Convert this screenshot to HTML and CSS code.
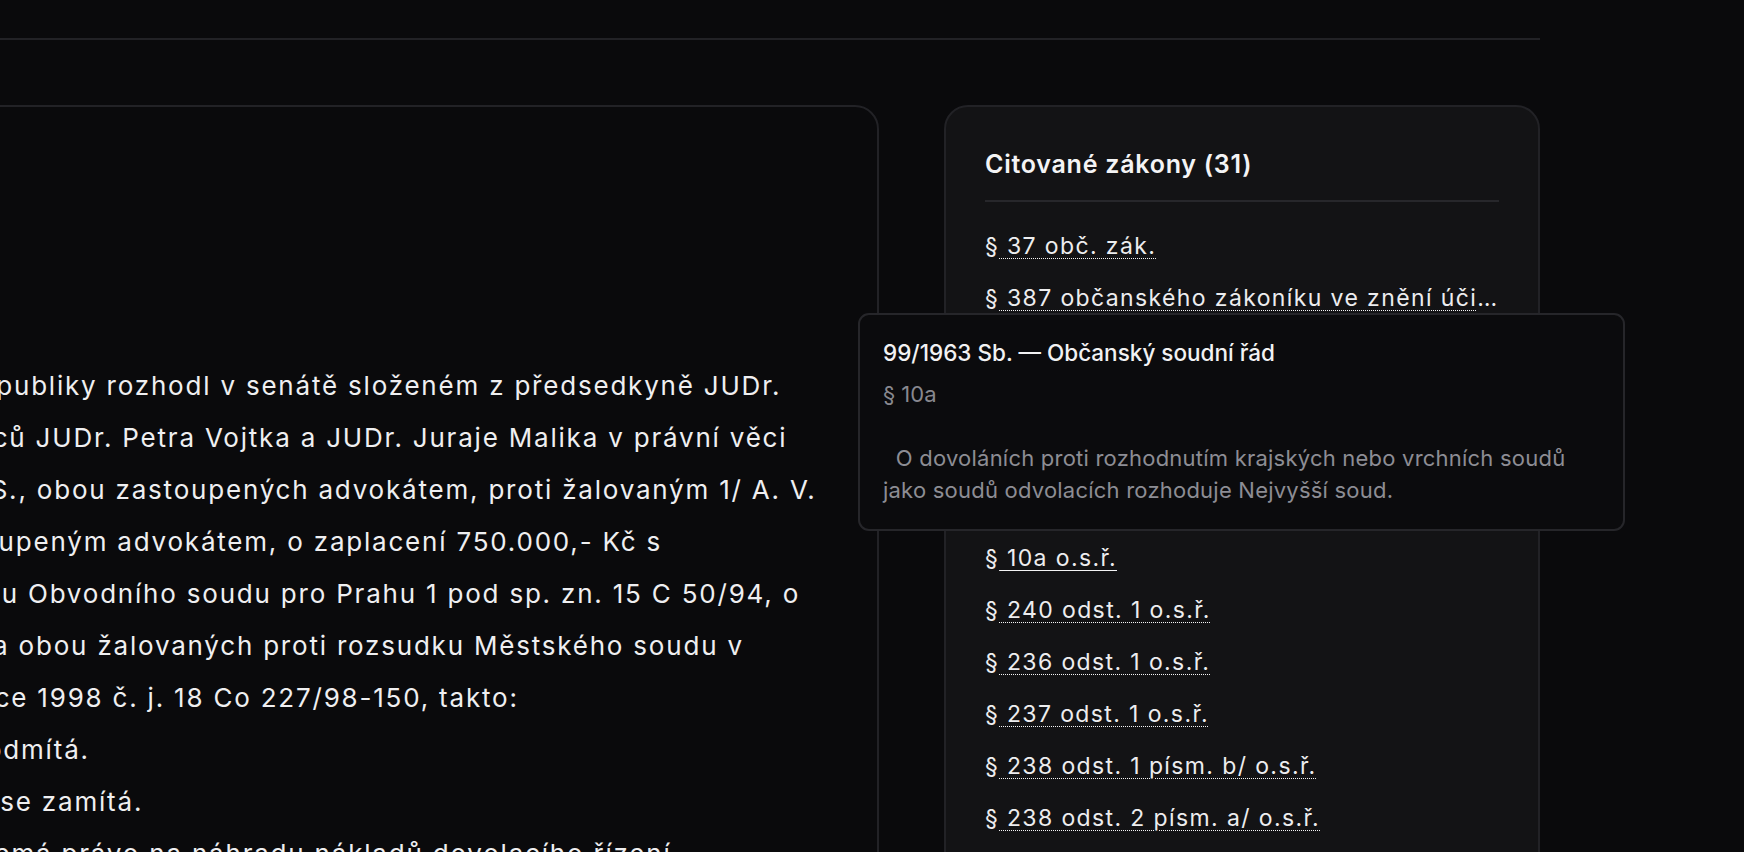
FILE: index.html
```html
<!DOCTYPE html>
<html lang="cs">
<head>
    <meta charset="UTF-8">
    <meta name="viewport" content="width=device-width, initial-scale=1.0">
    <title>Rozhodnutí – Nejvyšší soud</title>
    <link rel="stylesheet" href="styles.css">
</head>
<body>
    <div class="page">
        <header class="topbar"></header>

        <div class="layout">
            <article class="decision">
                <p class="decision-text">Nejvyšší soud České republiky rozhodl v senátě složeném z předsedkyně JUDr.<br>Ireny Puškinové a soudců JUDr. Petra Vojtka a JUDr. Juraje Malika v právní věci<br>žalobců 1/ P. S. a 2/ J. S., obou zastoupených advokátem, proti žalovaným 1/ A. V.<br>a 2/ M. V., oběma zastoupeným advokátem, o zaplacení 750.000,- Kč s<br>příslušenstvím, vedené u Obvodního soudu pro Prahu 1 pod sp. zn. 15 C 50/94, o<br>dovolání obou žalobců a obou žalovaných proti rozsudku Městského soudu v<br>Praze ze dne 15. prosince 1998 č. j. 18 Co 227/98-150, takto:</p>
                <p class="decision-text">I. Dovolání žalobců se odmítá.</p>
                <p class="decision-text">II. Dovolání žalovaných se zamítá.</p>
                <p class="decision-text">III. Žádný z účastníků nemá právo na náhradu nákladů dovolacího řízení.</p>
            </article>

            <aside class="laws">
                <h2 class="laws-title">Citované zákony (31)</h2>
                <ul class="laws-list">
                    <li class="law"><span class="sect">§</span><a href="#"> 37 obč. zák.</a></li>
                    <li class="law"><span class="sect">§</span><a href="#"> 387 občanského zákoníku ve znění účinném do 31. 12. 1991</a></li>
                    <li class="law"><span class="sect">§</span><a href="#"> 420 obč. zák.</a></li>
                    <li class="law"><span class="sect">§</span><a href="#"> 442 odst. 1 obč. zák.</a></li>
                    <li class="law"><span class="sect">§</span><a href="#"> 443 obč. zák.</a></li>
                    <li class="law"><span class="sect">§</span><a href="#"> 2 odst. 3 o.s.ř.</a></li>
                    <li class="law is-active">
                        <span class="sect">§</span><a href="#"> 10a o.s.ř.</a>
                        <div class="tip">
                            <div class="tip-title">99/1963 Sb. — Občanský soudní řád</div>
                            <div class="tip-sect">§ 10a</div>
                            <p class="tip-text">&#10;  O dovoláních proti rozhodnutím krajských nebo vrchních soudů jako soudů odvolacích rozhoduje Nejvyšší soud.</p>
                        </div>
                    </li>
                    <li class="law"><span class="sect">§</span><a href="#"> 240 odst. 1 o.s.ř.</a></li>
                    <li class="law"><span class="sect">§</span><a href="#"> 236 odst. 1 o.s.ř.</a></li>
                    <li class="law"><span class="sect">§</span><a href="#"> 237 odst. 1 o.s.ř.</a></li>
                    <li class="law"><span class="sect">§</span><a href="#"> 238 odst. 1 písm. b/ o.s.ř.</a></li>
                    <li class="law"><span class="sect">§</span><a href="#"> 238 odst. 2 písm. a/ o.s.ř.</a></li>
                    <li class="law"><span class="sect">§</span><a href="#"> 239 odst. 2 o.s.ř.</a></li>
                </ul>
            </aside>
        </div>
    </div>
</body>
</html>
```

FILE: styles.css
```css
* { box-sizing: border-box; }
body { margin: 0; background: #0a0a0c; color: #ededef; font-family: Inter, "Noto Sans", sans-serif; overflow: hidden; }

/* stranka je posunuta doleva, levy okraj je mimo obraz */
.page { width: 1913px; margin-left: -373px; }
.topbar { height: 40px; border-bottom: 2px solid #222226; }
.layout { display: grid; grid-template-columns: 1fr 596px; gap: 65px; margin-top: 65px; align-items: start; }

.decision { border: 2px solid #222226; border-radius: 24px; padding: 253px 40px 40px; min-height: 900px; }
.decision-text { margin: 0; font-size: 26px; line-height: 52px; letter-spacing: 0.069em; white-space: nowrap; color: #efeff1; }

.laws { background: #131315; border: 2px solid #222226; border-radius: 24px; padding: 38px 39px; min-height: 800px; }
.laws-title { margin: 0; padding-bottom: 17px; border-bottom: 2px solid #27272b; font-size: 25px; line-height: 38px; font-weight: 600; letter-spacing: 0.03em; color: #f4f4f5; }
.laws-list { list-style: none; margin: 18px 0 0; padding: 0; }
.law { display: flex; position: relative; font-size: 23px; line-height: 52px; letter-spacing: 0.06em; color: #ededef; }
.law .sect { flex: none; }
.law a { color: inherit; white-space: pre; overflow: hidden; text-overflow: ellipsis; text-decoration: underline dotted 1px; text-decoration-color: #f4f4f5; text-underline-offset: 4px; }
.law.is-active a { text-decoration-style: solid; }

/* tooltip nad aktivnim paragrafem */
.tip { position: absolute; left: -127px; bottom: calc(100% + 1px); width: 767px; padding: 22px 23px 23px; background: #0b0b0d; border: 2px solid #26262a; border-radius: 11px; letter-spacing: 0; z-index: 10; }
.tip-title { font-size: 22.5px; line-height: 32px; font-weight: 500; color: #f2f2f3; margin-bottom: 9px; }
.tip-sect { font-size: 22px; line-height: 32px; color: #88888f; }
.tip-text { margin: 0; font-size: 22px; line-height: 32px; letter-spacing: 0.01em; color: #8d8d94; white-space: pre-wrap; }
```
